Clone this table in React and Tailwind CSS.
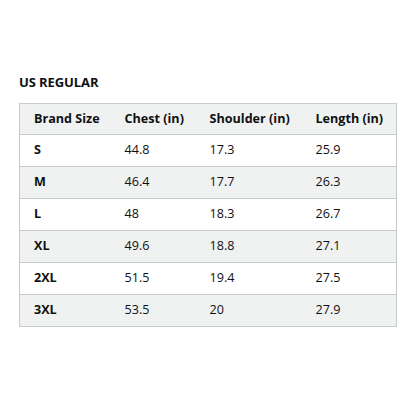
import React from 'react';

const rows = [
  ['S', '44.8', '17.3', '25.9'],
  ['M', '46.4', '17.7', '26.3'],
  ['L', '48', '18.3', '26.7'],
  ['XL', '49.6', '18.8', '27.1'],
  ['2XL', '51.5', '19.4', '27.5'],
  ['3XL', '53.5', '20', '27.9'],
];

export default function App() {
  return (
    <div className="w-[416px] h-[416px] bg-white pt-[73px] px-[19px] text-[#0f1111]" style={{ fontFamily: '"Open Sans", "Noto Sans", sans-serif' }}>
      <h2 className="text-[13px] font-bold leading-[18px] tracking-[-0.1px]">US REGULAR</h2>
      <table className="mt-[12px] w-[377px] border-collapse border border-[#c8cbcb] text-[12.6px] table-fixed">
        <colgroup>
          <col className="w-[91px]" />
          <col className="w-[85px]" />
          <col className="w-[106px]" />
          <col className="w-[95px]" />
        </colgroup>
        <thead>
          <tr className="bg-[#f0f2f2] h-[31px]">
            {['Brand Size', 'Chest (in)', 'Shoulder (in)', 'Length (in)'].map((h) => (
              <th key={h} className="text-left font-bold pl-[14px] whitespace-nowrap">{h}</th>
            ))}
          </tr>
        </thead>
        <tbody>
          {rows.map((r, i) => (
            <tr key={r[0]} className={`h-[32px] border-t border-[#c8cbcb] ${i % 2 === 1 ? 'bg-[#f0f2f2]' : 'bg-white'}`}>
              {r.map((c, j) => (
                <td key={j} className={`pl-[14px] ${j === 0 ? 'font-bold' : ''}`}>{c}</td>
              ))}
            </tr>
          ))}
        </tbody>
      </table>
    </div>
  );
}
